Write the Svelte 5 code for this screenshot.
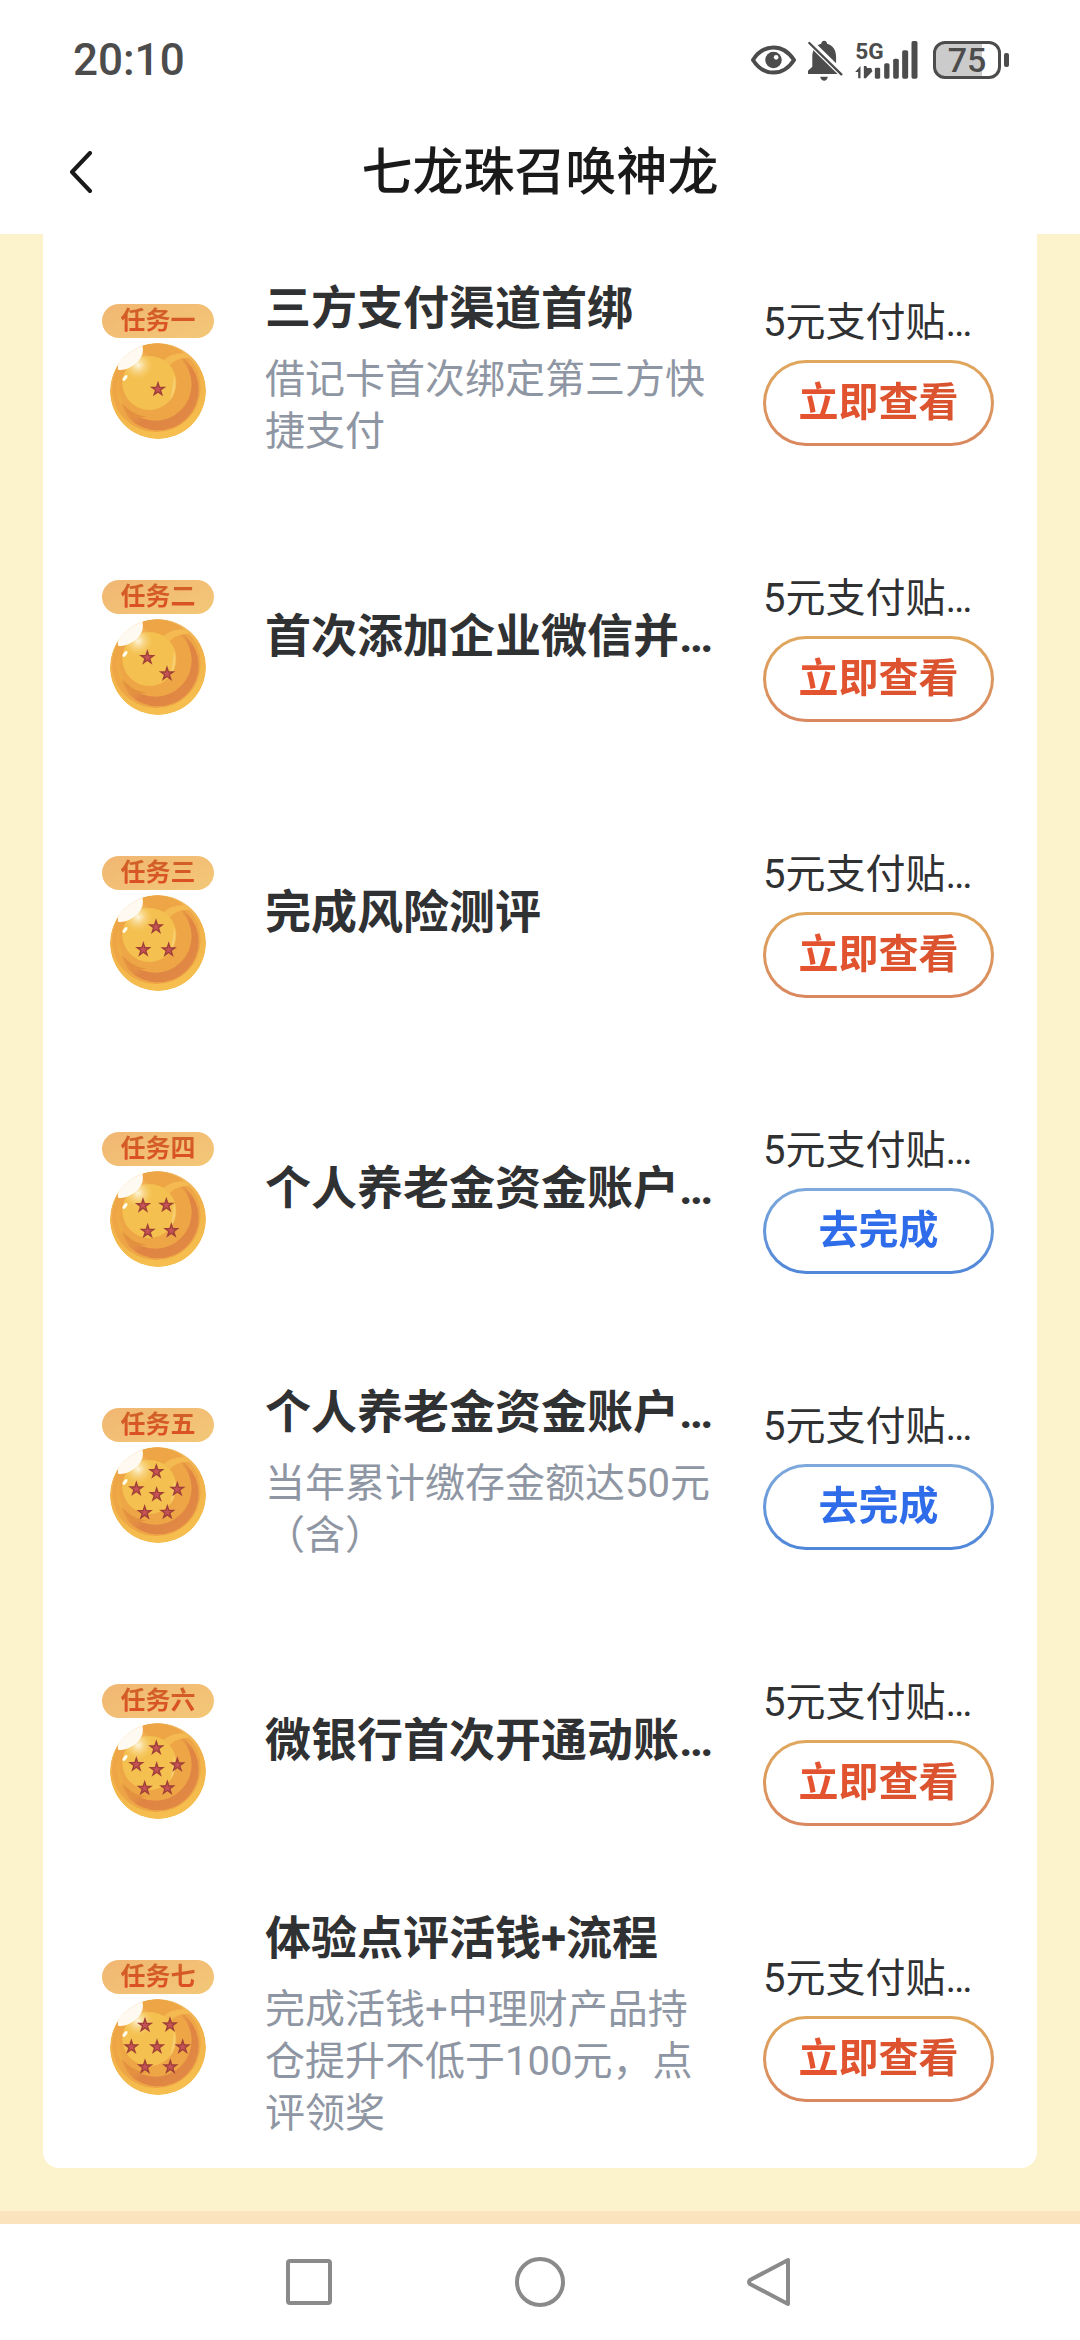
<script>
	const tasks = [
		{
			badge: '任务一',
			title: '三方支付渠道首绑',
			desc: '借记卡首次绑定第三方快捷支付',
			stars: [[144, 139]]
		},
		{
			badge: '任务二',
			title: '首次添加企业微信并…',
			stars: [[112, 116], [171, 165]]
		},
		{
			badge: '任务三',
			title: '完成风险测评',
			stars: [[138, 96], [100, 164], [176, 165]]
		},
		{
			badge: '任务四',
			title: '个人养老金资金账户…',
			todo: true,
			stars: [[99, 104], [169, 103], [113, 181], [184, 179]]
		},
		{
			badge: '任务五',
			title: '个人养老金资金账户…',
			desc: '当年累计缴存金额达50元（含）',
			todo: true,
			stars: [[139, 74], [79, 126], [202, 127], [140, 143], [104, 197], [172, 196]]
		},
		{
			badge: '任务六',
			title: '微银行首次开通动账…',
			stars: [[139, 75], [79, 125], [202, 126], [140, 140], [104, 196], [172, 195]]
		},
		{
			badge: '任务七',
			title: '体验点评活钱+流程',
			desc: '完成活钱+中理财产品持仓提升不低于100元，点评领奖',
			stars: [[105, 79], [180, 78], [64, 144], [141, 144], [218, 144], [105, 204], [181, 204]]
		}
	];

	// five-pointed star around 0,0
	const star = Array.from({ length: 10 }, (_, i) => {
		const r = i % 2 ? 10 : 26;
		const a = (Math.PI / 5) * i - Math.PI / 2;
		return `${(r * Math.cos(a)).toFixed(1)},${(r * Math.sin(a)).toFixed(1)}`;
	}).join(' ');
</script>

<div class="page">
	<div class="status">
		<span class="time">20:10</span>
		<div class="status-icons">
			<svg class="eye" viewBox="0 0 136 90" aria-hidden="true">
				<path d="M6 45C22 20 44 7 68 7s46 13 62 38c-16 25-38 38-62 38S22 70 6 45z" fill="none" stroke="#4c4c4c" stroke-width="12" />
				<circle cx="68" cy="45" r="25" fill="#4c4c4c" />
				<circle cx="76" cy="37" r="7" fill="#fff" />
			</svg>
			<svg class="bell" viewBox="0 0 106 122" aria-hidden="true">
				<path
					d="M0 102V92l13-12V50c0-22 10-36 27-40 1-6 4-9 9-9s8 3 9 9c17 5 27 18 27 40v30l14 14v8zM37 110h23c-1 8-6 12-11 12s-11-4-12-12z"
					fill="#4c4c4c"
				/>
				<path d="M-2 -2L112 110" stroke="#fff" stroke-width="20" />
				<path d="M4 8l97 95" stroke="#4c4c4c" stroke-width="7" stroke-linecap="round" />
			</svg>
			<svg class="signal" viewBox="0 -24 188 162" aria-hidden="true">
				<text x="0" y="54" font-size="68" font-weight="700">5G</text>
				<path d="M0 93l16-18v37H9V93zM26 112V75h7l3 6h12l4 10-20 21z" />
				<rect x="59" y="80" width="16" height="33" rx="4" />
				<rect x="87" y="67" width="16" height="46" rx="5" />
				<rect x="114" y="53" width="17" height="60" rx="5" />
				<rect x="141" y="28" width="18" height="85" rx="5" />
				<rect x="169" y="0" width="18" height="113" rx="5" />
			</svg>
			<div class="battery"><span>75</span></div>
		</div>
	</div>

	<header>
		<button class="back" aria-label="返回">
			<svg viewBox="0 0 24 42" aria-hidden="true">
				<path d="M21 2L3 21l18 19" fill="none" stroke="#1a1a1a" stroke-width="4" stroke-linecap="round" stroke-linejoin="round" />
			</svg>
		</button>
		<h1>七龙珠召唤神龙</h1>
	</header>

	<main>
		<ul class="card">
			{#each tasks as task}
				<li>
					<div class="icon">
						<span class="badge"><span>{task.badge}</span></span>
						<svg class="ball" viewBox="0 0 288 288" aria-hidden="true">
							<defs>
								<linearGradient id="rim" x1="0" y1="0" x2="0.3" y2="1">
									<stop offset="0" stop-color="#f3c77c" />
									<stop offset="0.5" stop-color="#f1b04a" />
									<stop offset="1" stop-color="#f5be4e" />
								</linearGradient>
								<linearGradient id="shade" x1="0" y1="0" x2="1" y2="1">
									<stop offset="0.35" stop-color="#efab46" />
									<stop offset="0.6" stop-color="#df8443" />
									<stop offset="1" stop-color="#e38b45" />
								</linearGradient>
								<radialGradient id="glow">
									<stop offset="0" stop-color="#fffdf0" stop-opacity="0.9" />
									<stop offset="1" stop-color="#f9cf6c" stop-opacity="0" />
								</radialGradient>
								<clipPath id="round"><circle cx="144" cy="144" r="144" /></clipPath>
							</defs>
							<g clip-path="url(#round)">
								<circle cx="144" cy="144" r="144" fill="url(#rim)" />
								<circle cx="139" cy="134" r="133" fill="#eea545" />
								<circle cx="144" cy="140" r="122" fill="url(#shade)" />
								<circle cx="136" cy="124" r="109" fill="#eea546" />
								<path d="M158 54c18-18 42-26 67-23l14 14c-28-1-46 7-61 23z" fill="#f4b951" />
								<path d="M36 180c20 25 45 38 74 40l-40 8c-16-12-28-28-34-48z" fill="#e3913f" />
								<circle cx="118" cy="120" r="81" fill="#f4c04f" />
								<circle cx="84" cy="66" r="46" fill="url(#glow)" />
								<path d="M192 95c8 27 4 54-11 77 5-27 9-50 11-77z" fill="#f8ce72" />
								<path d="M97 8c6 20-4 42-22 56-17 13-37 20-51 16C20 45 54 4 97 8z" fill="#fffaf1" />
							</g>
							<ellipse cx="45" cy="105" rx="5" ry="10" transform="rotate(38 45 105)" fill="#fffdf0" />
							{#each task.stars as [x, y]}
								<g transform="translate({x} {y})">
									<polygon points={star} fill="#9f3f38" />
									<polygon points={star} fill="#c65358" transform="scale(0.5)" />
								</g>
							{/each}
						</svg>
					</div>
					<div class="text">
						<h2>{task.title}</h2>
						{#if task.desc}
							<p>{task.desc}</p>
						{/if}
					</div>
					<div class="reward">
						<span>5元支付贴…</span>
						<button class:todo={task.todo}>
							<b>{task.todo ? '去完成' : '立即查看'}</b>
						</button>
					</div>
				</li>
			{/each}
		</ul>
	</main>

	<nav>
		<button aria-label="最近任务">
			<svg viewBox="0 0 50 50"><rect x="4" y="4" width="42" height="42" rx="2" /></svg>
		</button>
		<button aria-label="主页">
			<svg viewBox="0 0 50 50"><circle cx="25" cy="25" r="23" /></svg>
		</button>
		<button aria-label="返回上一级">
			<svg viewBox="0 0 50 50"><path d="M42 3v44L4 27q-2-2 0-4z" /></svg>
		</button>
	</nav>
</div>

<style>
	:global(body) {
		margin: 0;
		background: #fff;
	}

	.page {
		font-family: Roboto, 'Noto Sans CJK SC', sans-serif;
		color: #303133;
	}

	button {
		font: inherit;
		padding: 0;
		border: none;
		background: none;
		cursor: pointer;
	}

	svg {
		display: block;
	}

	.status {
		display: flex;
		align-items: center;
		justify-content: space-between;
		box-sizing: border-box;
		height: 110px;
		padding: 10px 71px 0 73px;
		color: #4c4c4c;
	}

	.time {
		font-size: 44px;
		font-weight: 500;
	}

	.status-icons {
		display: flex;
		align-items: center;
		gap: 12px;
	}

	.eye {
		width: 45px;
		height: 30px;
	}

	.bell {
		width: 35px;
		height: 41px;
	}

	.signal {
		width: 63px;
		height: 54px;
		fill: #4c4c4c;
	}

	.battery {
		position: relative;
		box-sizing: border-box;
		width: 68px;
		height: 38px;
		margin: 0 8px 0 3px;
		border: 3px solid #4c4c4c;
		border-radius: 12px;
		background: linear-gradient(to right, #cbcbcb 74%, #fff 74%);
		text-align: center;
		font-size: 34px;
		font-weight: 500;
		line-height: 33px;
	}

	.battery::after {
		content: '';
		position: absolute;
		top: 9px;
		right: -11px;
		width: 5px;
		height: 14px;
		border-radius: 2px;
		background: #4c4c4c;
	}

	header {
		display: grid;
		grid-template-columns: 1fr auto 1fr;
		align-items: center;
		height: 124px;
		padding: 0 69px;
	}

	.back {
		justify-self: start;
	}

	.back svg {
		width: 24px;
		height: 42px;
	}

	h1 {
		margin: 0;
		padding-bottom: 8px;
		color: #1a1a1a;
		font-size: 51px;
		font-weight: 500;
	}

	main {
		padding: 0 43px 43px;
		border-bottom: 13px solid #fae3bd;
		background: #fcf2cb;
	}

	.card {
		display: flex;
		flex-direction: column;
		gap: 28px;
		margin: 0;
		padding: 2px 43px 28px 59px;
		border-radius: 0 0 16px 16px;
		background: #fff;
		list-style: none;
	}

	li {
		display: grid;
		grid-template-columns: 117px 1fr 231px;
		align-items: center;
		column-gap: 46px;
		min-height: 248px;
	}

	.icon {
		display: flex;
		flex-direction: column;
		align-items: center;
		gap: 5px;
		width: 112px;
		padding-top: 22px;
	}

	.badge {
		width: 112px;
		border-radius: 17px;
		background: linear-gradient(160deg, #f1b673, #f3c877);
		text-align: center;
		font-size: 25px;
		font-weight: 700;
		line-height: 34px;
	}

	.badge span {
		background: linear-gradient(#cf6428, #de4c22);
		background-clip: text;
		color: transparent;
	}

	.ball {
		width: 96px;
		height: 96px;
	}

	h2 {
		margin: 0;
		font-size: 46px;
		font-weight: 700;
		line-height: 92px;
		white-space: nowrap;
	}

	p {
		margin: 0;
		color: #8f96a3;
		font-size: 40px;
		line-height: 52px;
	}

	.reward {
		display: flex;
		flex-direction: column;
		padding-top: 10px;
		font-size: 40px;
		line-height: 75px;
		white-space: nowrap;
	}

	.reward button {
		height: 86px;
		border: 3px solid transparent;
		border-radius: 43px;
		background:
			linear-gradient(#fff, #fff) padding-box,
			linear-gradient(#e0a85c, #d9875f) border-box;
		line-height: 80px;
	}

	.reward b {
		background: linear-gradient(to right, #e5532f, #d9532f);
		background-clip: text;
		color: transparent;
	}

	.reward .todo {
		background:
			linear-gradient(#fff, #fff) padding-box,
			linear-gradient(#7ea9dc, #4f86d8) border-box;
	}

	.reward .todo b {
		background: #2f6cea;
		background-clip: text;
	}

	nav {
		display: flex;
		justify-content: center;
		align-items: center;
		gap: 181px;
		height: 116px;
	}

	nav svg {
		width: 50px;
		height: 50px;
		fill: none;
		stroke: #8a8a8a;
		stroke-width: 4px;
		stroke-linejoin: round;
	}
</style>
